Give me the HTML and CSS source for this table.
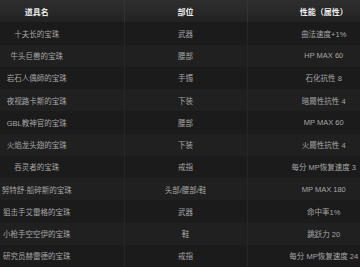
FILE: index.html
```html
<!DOCTYPE html>
<html lang="zh">
<head>
<meta charset="utf-8">
<link rel="stylesheet" href="styles.css">
</head>
<body>
<table class="gems">
  <colgroup><col class="c1"><col class="c2"><col class="c3"></colgroup>
  <thead>
    <tr><th class="name">道具名</th><th class="part">部位</th><th class="stat">性能（属性）</th></tr>
  </thead>
  <tbody>
    <tr><td class="name">十夫长的宝珠</td><td class="part">武器</td><td class="stat">曲法速度+1%</td></tr>
    <tr><td class="name">牛头巨兽的宝珠</td><td class="part">腰部</td><td class="stat">HP MAX 60</td></tr>
    <tr><td class="name">岩石人偶師的宝珠</td><td class="part">手镯</td><td class="stat">石化抗性 8</td></tr>
    <tr><td class="name">夜视路卡斯的宝珠</td><td class="part">下装</td><td class="stat">暗屬性抗性 4</td></tr>
    <tr><td class="name">GBL教神官的宝珠</td><td class="part">腰部</td><td class="stat">MP MAX 60</td></tr>
    <tr><td class="name">火焰龙头翅的宝珠</td><td class="part">下装</td><td class="stat">火屬性抗性 4</td></tr>
    <tr><td class="name">吞灵者的宝珠</td><td class="part">戒指</td><td class="stat">每分 MP恢复速度 3</td></tr>
    <tr><td class="name">努特舒·船碎斯的宝珠</td><td class="part">头部/腰部/鞋</td><td class="stat">MP MAX 180</td></tr>
    <tr><td class="name">狙击手艾雷格的宝珠</td><td class="part">武器</td><td class="stat">命中率1%</td></tr>
    <tr><td class="name">小枪手空空伊的宝珠</td><td class="part">鞋</td><td class="stat">跳跃力 20</td></tr>
    <tr><td class="name">研究员赫雷德的宝珠</td><td class="part">戒指</td><td class="stat">每分 MP恢复速度 24</td></tr>
  </tbody>
</table>
</body>
</html>
```
FILE: styles.css
```css
html, body {
  margin: 0;
  padding: 0;
  background: #1c1c1c;
}
body {
  width: 360px;
  height: 267px;
  overflow: hidden;
  font-family: "Liberation Sans", "Noto Sans CJK SC", sans-serif;
}
.gems {
  width: 360px;
  border-collapse: collapse;
  table-layout: fixed;
}
.c1 { width: 124px; }
.c2 { width: 123px; }
.c3 { width: 113px; }
.gems th,
.gems td {
  height: 22.25px;
  padding: 0;
  text-align: center;
  white-space: nowrap;
  border-left: 1px solid #262626;
  box-sizing: border-box;
}
.gems th:first-child,
.gems td:first-child { border-left: none; }
.gems th {
  background: linear-gradient(#2e2e2e, #222222);
  color: #ececec;
  font-size: 8px;
  font-weight: bold;
  border-left-color: #333333;
}
.gems td {
  color: #a6a6a6;
  font-size: 7.5px;
}
.gems tbody tr:nth-child(odd) td { background: #1b1b1b; }
.gems tbody tr:nth-child(even) td { background: #202020; }
.gems .name { padding-right: 50px; }
.gems .part { padding-left: 0; }
.gems .stat { padding-left: 40px; }
```
